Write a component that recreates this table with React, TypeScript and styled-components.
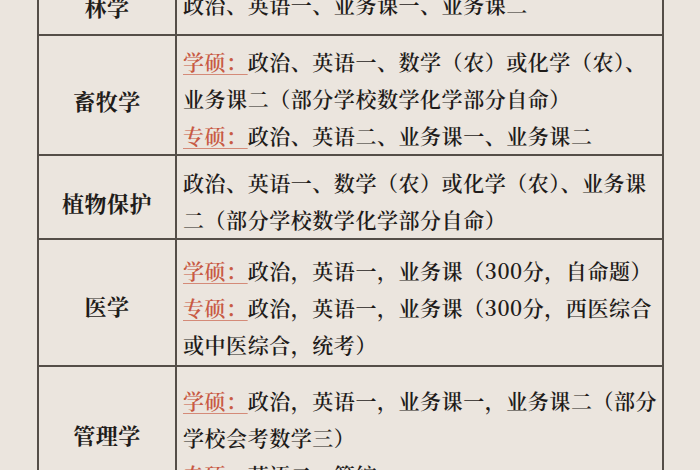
import React from "react";
import styled, { createGlobalStyle } from "styled-components";

const Global = createGlobalStyle`
  html, body { margin: 0; padding: 0; background: #ebe5de; }
  * { box-sizing: border-box; }
`;

const Page = styled.div`
  width: 700px;
  height: 470px;
  overflow: hidden;
  background: #ebe5de;
  padding-left: 37px;
  font-family: "Noto Serif CJK SC", "Noto Sans CJK SC", "Liberation Serif", serif;
  color: #1f1c1a;
`;

const Table = styled.div`
  width: 627px;
  margin-top: -24px;
  border: 2px solid #544e48;
  border-bottom: none;
`;

const Row = styled.div`
  display: grid;
  grid-template-columns: 138px 1fr;
  border-bottom: 2px solid #544e48;
`;

const Label = styled.div<{ $pt: number }>`
  border-right: 2px solid #544e48;
  display: flex;
  align-items: center;
  justify-content: center;
  padding-top: ${(p) => p.$pt}px;
  font-size: 22px;
  font-weight: 700;
  letter-spacing: 0.5px;
`;

const Content = styled.div<{ $pt: number; $pb: number }>`
  padding: ${(p) => p.$pt}px 2px ${(p) => p.$pb}px 6px;
  font-size: 21px;
  font-weight: 600;
  line-height: 37px;
  letter-spacing: 0.55px;
`;

const Line = styled.div`
  white-space: nowrap;
  height: 37px;
`;

const Tag = styled.span`
  color: #c85a44;
  text-decoration: underline;
  text-decoration-color: #d48a78;
  text-decoration-thickness: 1px;
  text-underline-offset: 4px;
`;

type RowData = { label: string; lp: number; pt: number; pb: number; lines: React.ReactNode[] };

const rows: RowData[] = [
  { label: "林学", lp: 0, pt: 8, pb: 11, lines: ["政治、英语一、业务课一、业务课二"] },
  {
    label: "畜牧学",
    lp: 10,
    pt: 7,
    pb: 0,
    lines: [
      <><Tag>学硕：</Tag>政治、英语一、数学（农）或化学（农）、</>,
      "业务课二（部分学校数学化学部分自命）",
      <><Tag>专硕：</Tag>政治、英语二、业务课一、业务课二</>,
    ],
  },
  {
    label: "植物保护",
    lp: 10,
    pt: 8,
    pb: 0,
    lines: [
      "政治、英语一、数学（农）或化学（农）、业务课",
      "二（部分学校数学化学部分自命）",
    ],
  },
  {
    label: "医学",
    lp: 6,
    pt: 12,
    pb: 2,
    lines: [
      <><Tag>学硕：</Tag>政治，英语一，业务课（300分，自命题）</>,
      <><Tag>专硕：</Tag>政治，英语一，业务课（300分，西医综合</>,
      "或中医综合，统考）",
    ],
  },
  {
    label: "管理学",
    lp: 4,
    pt: 15,
    pb: 4,
    lines: [
      <><Tag>学硕：</Tag>政治，英语一，业务课一，业务课二（部分</>,
      "学校会考数学三）",
      <><Tag>专硕：</Tag>英语二，管综</>,
    ],
  },
];

export default function App() {
  return (
    <Page>
      <Global />
      <Table>
        {rows.map((r) => (
          <Row key={r.label}>
            <Label $pt={r.lp}>{r.label}</Label>
            <Content $pt={r.pt} $pb={r.pb}>
              {r.lines.map((l, i) => (
                <Line key={i}>{l}</Line>
              ))}
            </Content>
          </Row>
        ))}
      </Table>
    </Page>
  );
}
